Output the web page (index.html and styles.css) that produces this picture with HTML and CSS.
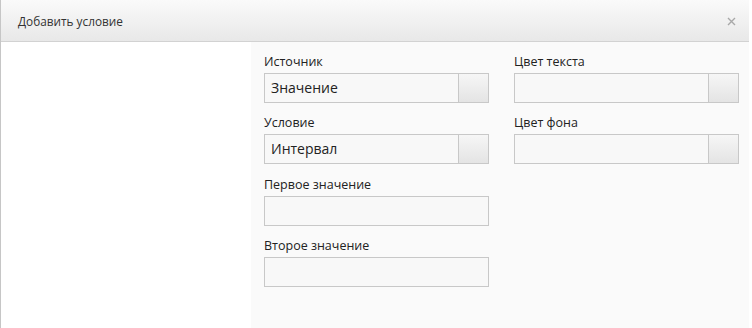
FILE: index.html
```html
<!DOCTYPE html>
<html lang="ru">
<head>
<meta charset="utf-8">
<link rel="stylesheet" href="styles.css">
</head>
<body>
<div class="dialog">
  <div class="header">
    <span class="title">Добавить условие</span>
    <span class="close">
      <svg width="9" height="9" viewBox="0 0 9 9"><path d="M1 1L8 8M8 1L1 8" stroke="#a8a8a8" stroke-width="1.4"/></svg>
    </span>
  </div>
  <div class="body">
    <div class="side"></div>
    <div class="panel">
      <div class="col">
        <div class="field">
          <div class="label">Источник</div>
          <div class="input combo"><span class="value">Значение</span><span class="btn"></span></div>
        </div>
        <div class="field">
          <div class="label">Условие</div>
          <div class="input combo"><span class="value">Интервал</span><span class="btn"></span></div>
        </div>
        <div class="field">
          <div class="label">Первое значение</div>
          <div class="input"></div>
        </div>
        <div class="field">
          <div class="label">Второе значение</div>
          <div class="input"></div>
        </div>
      </div>
      <div class="col">
        <div class="field">
          <div class="label">Цвет текста</div>
          <div class="input combo"><span class="value"></span><span class="btn"></span></div>
        </div>
        <div class="field">
          <div class="label">Цвет фона</div>
          <div class="input combo"><span class="value"></span><span class="btn"></span></div>
        </div>
      </div>
    </div>
  </div>
</div>
</body>
</html>
```
FILE: styles.css
```css
html, body {
  margin: 0;
  padding: 0;
  background: #ffffff;
}
body {
  font-family: "Open Sans", "Noto Sans", sans-serif;
  color: #222;
}
.dialog {
  width: 748px;
  height: 328px;
  border-left: 1px solid #c6c6c6;
  display: flex;
  flex-direction: column;
}
.header {
  height: 42px;
  box-sizing: border-box;
  border-bottom: 1px solid #d2d2d2;
  background: linear-gradient(#fafafa, #e8e8e8);
  display: flex;
  align-items: center;
  justify-content: space-between;
  padding: 0 13px 0 17px;
}
.title {
  font-size: 11.8px;
  color: #333;
}
.close {
  display: flex;
  align-items: center;
  padding-top: 1px;
}
.body {
  flex: 1;
  display: flex;
}
.side {
  width: 250px;
  background: #fff;
}
.panel {
  flex: 1;
  background: #fafafa;
  display: flex;
  gap: 25px;
  padding: 13px 10px 0 13px;
}
.col {
  width: 225px;
  display: flex;
  flex-direction: column;
}
.field {
  margin-bottom: 13.3px;
}
.label {
  font-size: 12.5px;
  line-height: 14px;
  padding-bottom: 4px;
  color: #222;
}
.input {
  height: 30px;
  box-sizing: border-box;
  border: 1px solid #c8c8c8;
  background: #f8f8f8;
}
.combo {
  display: flex;
}
.value {
  flex: 1;
  font-size: 14px;
  line-height: 28px;
  padding-left: 6px;
  color: #222;
}
.btn {
  width: 29px;
  border-left: 1px solid #c8c8c8;
  background: linear-gradient(#f6f6f6, #e4e4e4);
}
```
